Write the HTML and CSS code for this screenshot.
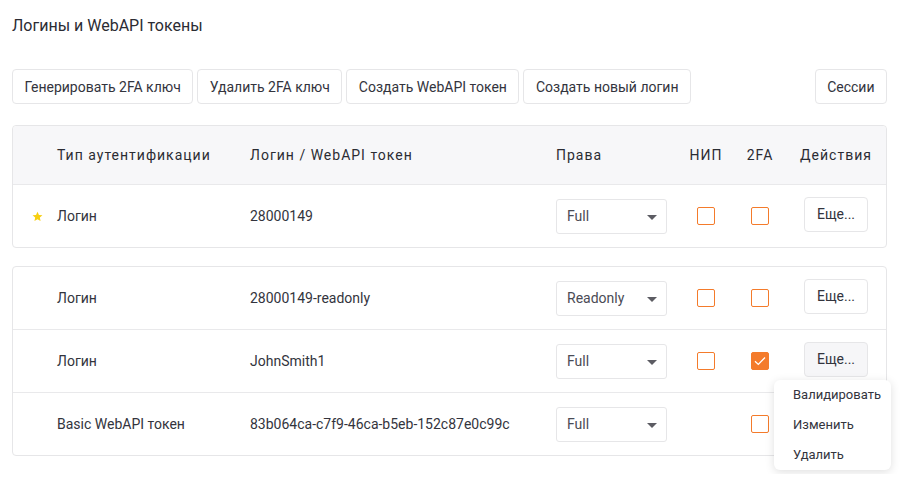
FILE: index.html
```html
<!DOCTYPE html>
<html lang="ru">
<head>
    <meta charset="UTF-8">
    <meta name="viewport" content="width=device-width, initial-scale=1.0">
    <title>Логины и WebAPI токены</title>
    <link rel="stylesheet" href="styles.css">
</head>
<body>
    <div class="page">
        <h1 class="title">Логины и WebAPI токены</h1>

        <div class="toolbar">
            <button class="btn">Генерировать 2FA ключ</button>
            <button class="btn">Удалить 2FA ключ</button>
            <button class="btn">Создать WebAPI токен</button>
            <button class="btn">Создать новый логин</button>
            <button class="btn btn-right">Сессии</button>
        </div>

        <div class="card">
            <div class="row head">
                <div class="cell"></div>
                <div class="cell">Тип аутентификации</div>
                <div class="cell">Логин / WebAPI токен</div>
                <div class="cell">Права</div>
                <div class="cell center">НИП</div>
                <div class="cell center">2FA</div>
                <div class="cell center">Действия</div>
            </div>
            <div class="row">
                <div class="cell star-cell">
                    <svg width="11" height="11" viewBox="0 0 24 24"><path d="M12 1.5l3.2 7 7.6.8-5.7 5.1 1.6 7.6L12 18.1 5.3 22l1.6-7.6L1.2 9.3l7.6-.8z" fill="#f7cf10"/></svg>
                </div>
                <div class="cell">Логин</div>
                <div class="cell">28000149</div>
                <div class="cell"><div class="select">Full<span class="caret"></span></div></div>
                <div class="cell center"><span class="check"></span></div>
                <div class="cell center"><span class="check"></span></div>
                <div class="cell center"><button class="btn btn-more">Еще...</button></div>
            </div>
        </div>

        <div class="card">
            <div class="row">
                <div class="cell"></div>
                <div class="cell">Логин</div>
                <div class="cell">28000149-readonly</div>
                <div class="cell"><div class="select">Readonly<span class="caret"></span></div></div>
                <div class="cell center"><span class="check"></span></div>
                <div class="cell center"><span class="check"></span></div>
                <div class="cell center"><button class="btn btn-more">Еще...</button></div>
            </div>
            <div class="row">
                <div class="cell"></div>
                <div class="cell">Логин</div>
                <div class="cell">JohnSmith1</div>
                <div class="cell"><div class="select">Full<span class="caret"></span></div></div>
                <div class="cell center"><span class="check"></span></div>
                <div class="cell center">
                    <span class="check checked">
                        <svg width="12" height="10" viewBox="0 0 12 10"><path d="M1 5.2l3.3 3.2L11 1.5" fill="none" stroke="#fff" stroke-width="1.3"/></svg>
                    </span>
                </div>
                <div class="cell center actions">
                    <button class="btn btn-more active">Еще...</button>
                    <div class="menu">
                        <div class="menu-item">Валидировать</div>
                        <div class="menu-item">Изменить</div>
                        <div class="menu-item">Удалить</div>
                    </div>
                </div>
            </div>
            <div class="row">
                <div class="cell"></div>
                <div class="cell">Basic WebAPI токен</div>
                <div class="cell">83b064ca-c7f9-46ca-b5eb-152c87e0c99c</div>
                <div class="cell"><div class="select">Full<span class="caret"></span></div></div>
                <div class="cell center"></div>
                <div class="cell center"><span class="check"></span></div>
                <div class="cell center"></div>
            </div>
        </div>
    </div>
</body>
</html>
```

FILE: styles.css
```css
* {
    box-sizing: border-box;
    margin: 0;
    padding: 0;
}
body {
    font-family: Roboto, 'Noto Sans', sans-serif;
    font-size: 14px;
    color: #33343d;
    background: #fff;
}
.page {
    width: 903px;
    padding: 14px 16px 0 12px;
}
.title {
    font-size: 16px;
    font-weight: 400;
    line-height: 24px;
    color: #2b2c33;
}
.toolbar {
    display: flex;
    gap: 4px;
    margin-top: 31px;
    margin-bottom: 21px;
}
.btn {
    font-family: inherit;
    font-size: 14px;
    color: #33343d;
    background: #fff;
    border: 1px solid #e6e6e8;
    border-radius: 4px;
    height: 35px;
    padding: 0 11.5px;
    cursor: pointer;
}
.btn-right {
    margin-left: auto;
}
.card {
    border: 1px solid #e6e6e8;
    border-radius: 4px;
    margin-bottom: 18px;
}
.row {
    display: grid;
    grid-template-columns: 44px 193px 306px 126px 48px 60px 92px 1fr;
    height: 63px;
    align-items: center;
    border-bottom: 1px solid #e9e9eb;
}
.row:last-child {
    border-bottom: none;
    height: 62px;
}
.row.head {
    height: 59px;
    background: #f7f7f9;
    letter-spacing: 1px;
    color: #2b2c33;
    border-radius: 4px 4px 0 0;
}
.cell {
    white-space: nowrap;
}
.center {
    display: flex;
    justify-content: center;
}
.star-cell {
    padding-left: 19px;
    display: flex;
}
.select {
    position: relative;
    width: 111px;
    height: 35px;
    line-height: 33px;
    padding-left: 10px;
    border: 1px solid #e6e6e8;
    border-radius: 3px;
    color: #4a4b55;
}
.caret {
    position: absolute;
    right: 9px;
    top: 15px;
    border-left: 5.5px solid transparent;
    border-right: 5.5px solid transparent;
    border-top: 5px solid #5c5c63;
}
.check {
    width: 18px;
    height: 18px;
    border: 1px solid #f47b2b;
    border-radius: 2px;
    display: flex;
    align-items: center;
    justify-content: center;
}
.check.checked {
    background: #f47b2b;
}
.btn-more {
    width: 64px;
    padding: 0;
    height: 35px;
    margin-bottom: 4px;
}
.btn-more.active {
    background: #f6f6f8;
}
.actions {
    position: relative;
}
.menu {
    position: absolute;
    top: 38px;
    left: -16px;
    width: 117px;
    background: #fff;
    border-radius: 6px;
    box-shadow: 0 2px 10px rgba(0, 0, 0, 0.13);
    z-index: 2;
}
.menu-item {
    height: 30px;
    line-height: 29px;
    padding-left: 19px;
    font-size: 13px;
    color: #33343d;
}
```
